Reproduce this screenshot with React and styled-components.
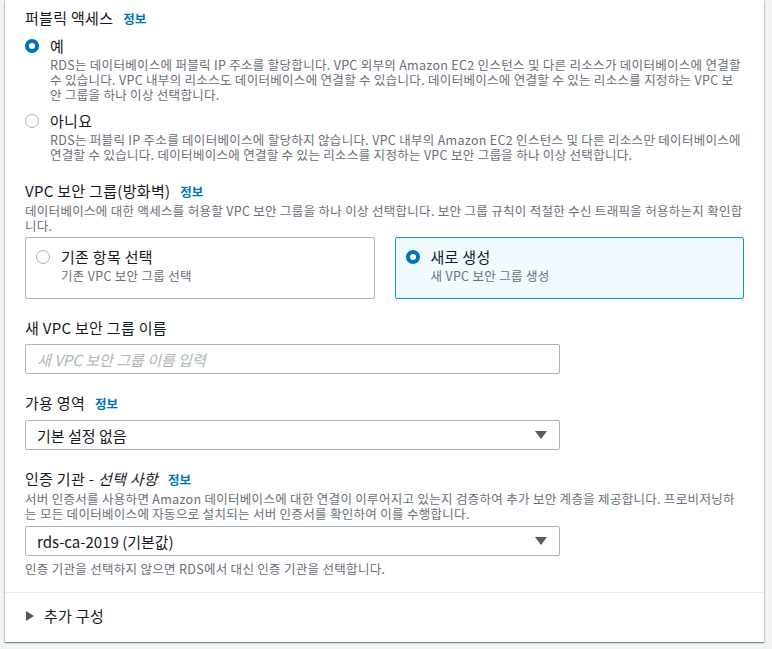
import styled, { createGlobalStyle } from "styled-components";

const GlobalStyle = createGlobalStyle`
    html, body {
        margin: 0;
        padding: 0;
        background: #f2f3f3;
    }
    body {
        font-family: "Noto Sans CJK KR", Roboto, sans-serif;
        color: #16191f;
    }
`

export default function App() {
    return (
        <Page>
            <GlobalStyle />
            <Card>
                <Body>
                    <Field>
                        <Label>퍼블릭 액세스<Info>정보</Info></Label>
                        <Options>
                            <Option>
                                <Radio checked />
                                <OptionText>
                                    <OptionTitle>예</OptionTitle>
                                    <Desc>RDS는 데이터베이스에 퍼블릭 IP 주소를 할당합니다. VPC 외부의 Amazon EC2 인스턴스 및 다른 리소스가 데이터베이스에 연결할 수 있습니다. VPC 내부의 리소스도 데이터베이스에 연결할 수 있습니다. 데이터베이스에 연결할 수 있는 리소스를 지정하는 VPC 보안 그룹을 하나 이상 선택합니다.</Desc>
                                </OptionText>
                            </Option>
                            <Option>
                                <Radio />
                                <OptionText>
                                    <OptionTitle>아니요</OptionTitle>
                                    <Desc>RDS는 퍼블릭 IP 주소를 데이터베이스에 할당하지 않습니다. VPC 내부의 Amazon EC2 인스턴스 및 다른 리소스만 데이터베이스에 연결할 수 있습니다. 데이터베이스에 연결할 수 있는 리소스를 지정하는 VPC 보안 그룹을 하나 이상 선택합니다.</Desc>
                                </OptionText>
                            </Option>
                        </Options>
                    </Field>

                    <Field>
                        <Label>VPC 보안 그룹(방화벽)<Info>정보</Info></Label>
                        <Desc>데이터베이스에 대한 액세스를 허용할 VPC 보안 그룹을 하나 이상 선택합니다. 보안 그룹 규칙이 적절한 수신 트래픽을 허용하는지 확인합니다.</Desc>
                        <Tiles>
                            <Tile>
                                <Radio />
                                <OptionText>
                                    <OptionTitle>기존 항목 선택</OptionTitle>
                                    <Desc>기존 VPC 보안 그룹 선택</Desc>
                                </OptionText>
                            </Tile>
                            <Tile selected>
                                <Radio checked />
                                <OptionText>
                                    <OptionTitle>새로 생성</OptionTitle>
                                    <Desc>새 VPC 보안 그룹 생성</Desc>
                                </OptionText>
                            </Tile>
                        </Tiles>
                    </Field>

                    <Field>
                        <Label>새 VPC 보안 그룹 이름</Label>
                        <Control>
                            <Input placeholder="새 VPC 보안 그룹 이름 입력" />
                        </Control>
                    </Field>

                    <Field>
                        <Label>가용 영역<Info>정보</Info></Label>
                        <Control>
                            <Select>
                                <span>기본 설정 없음</span>
                                <Caret />
                            </Select>
                        </Control>
                    </Field>

                    <Field>
                        <Label>인증 기관 - <em>선택 사항</em><Info>정보</Info></Label>
                        <Desc>서버 인증서를 사용하면 Amazon 데이터베이스에 대한 연결이 이루어지고 있는지 검증하여 추가 보안 계층을 제공합니다. 프로비저닝하는 모든 데이터베이스에 자동으로 설치되는 서버 인증서를 확인하여 이를 수행합니다.</Desc>
                        <Control>
                            <Select>
                                <span>rds-ca-2019 (기본값)</span>
                                <Caret />
                            </Select>
                        </Control>
                        <Hint>인증 기관을 선택하지 않으면 RDS에서 대신 인증 기관을 선택합니다.</Hint>
                    </Field>
                </Body>
                <Expander>
                    <ExpandIcon />
                    <ExpandTitle>추가 구성</ExpandTitle>
                </Expander>
            </Card>
        </Page>
    )
}

const Page = styled.div`
    min-height: 649px;
    background: #f2f3f3;
    padding: 0 8px 0 5px;
`
const Card = styled.div`
    width: 759px;
    background: #ffffff;
    box-shadow: 0 1px 1px 0 rgba(0, 28, 36, 0.3), 1px 1px 1px 0 rgba(0, 28, 36, 0.15), -1px 1px 1px 0 rgba(0, 28, 36, 0.15);
`
const Body = styled.div`
    padding: 7px 20px 16px 20px;
    display: flex;
    flex-direction: column;
    gap: 18px;
`
const Field = styled.div`
    display: flex;
    flex-direction: column;
`
const Label = styled.div`
    font-size: 15px;
    line-height: 22px;
    letter-spacing: 0.3px;
    color: #16191f;
    em {
        font-style: italic;
    }
`
const Info = styled.span`
    margin-left: 10px;
    font-size: 12.5px;
    font-weight: 700;
    letter-spacing: 0;
    color: #0073bb;
`
const Options = styled.div`
    display: flex;
    flex-direction: column;
    gap: 8px;
    margin-top: 5px;
`
const Option = styled.div`
    display: flex;
    align-items: flex-start;
    gap: 11px;
`
const Radio = styled.span`
    flex: none;
    box-sizing: border-box;
    width: 14px;
    height: 14px;
    margin-top: 4px;
    border-radius: 50%;
    background: #ffffff;
    border: ${p => p.checked ? "4px solid #0073bb" : "1px solid #aab7b8"};
`
const OptionText = styled.div`
    display: flex;
    flex-direction: column;
    min-width: 0;
`
const OptionTitle = styled.div`
    font-size: 15px;
    line-height: 22px;
    letter-spacing: 0.3px;
    color: #16191f;
`
const Desc = styled.div`
    font-size: 12.5px;
    line-height: 15px;
    letter-spacing: 0.3px;
    color: #687078;
`
const Tiles = styled.div`
    display: grid;
    grid-template-columns: 1fr 1fr;
    gap: 20px;
    margin-top: 4px;
`
const Tile = styled.div`
    display: flex;
    align-items: flex-start;
    gap: 11px;
    padding: 8px 10px 15px 10px;
    border-radius: 2px;
    border: 1px solid ${p => p.selected ? "#00a1c9" : "#aab7b8"};
    background: ${p => p.selected ? "#f1faff" : "#ffffff"};
`
const Control = styled.div`
    width: 535px;
    margin-top: 5px;
`
const Input = styled.input`
    box-sizing: border-box;
    width: 100%;
    height: 30px;
    padding: 0 11px;
    border: 1px solid #aab7b8;
    border-radius: 2px;
    font-family: "Noto Sans CJK KR", Roboto, sans-serif;
    font-size: 15px;
    color: #16191f;
    outline: none;
    &::placeholder {
        color: #aab7b8;
        font-style: italic;
    }
`
const Select = styled.div`
    box-sizing: border-box;
    height: 30px;
    padding: 0 12px 0 11px;
    display: flex;
    align-items: center;
    justify-content: space-between;
    border: 1px solid #aab7b8;
    border-radius: 2px;
    font-size: 15px;
    color: #16191f;
`
const Caret = styled.span`
    width: 0;
    height: 0;
    border-left: 6px solid transparent;
    border-right: 6px solid transparent;
    border-top: 8px solid #545b64;
`
const Hint = styled(Desc)`
    margin-top: 5px;
`
const Expander = styled.div`
    border-top: 1px solid #eaeded;
    padding: 12px 20px 15px 21px;
    display: flex;
    align-items: center;
    gap: 10px;
`
const ExpandIcon = styled.span`
    width: 0;
    height: 0;
    border-top: 5px solid transparent;
    border-bottom: 5px solid transparent;
    border-left: 8px solid #545b64;
`
const ExpandTitle = styled.div`
    font-size: 15px;
    line-height: 22px;
    letter-spacing: 0.3px;
    color: #16191f;
`
